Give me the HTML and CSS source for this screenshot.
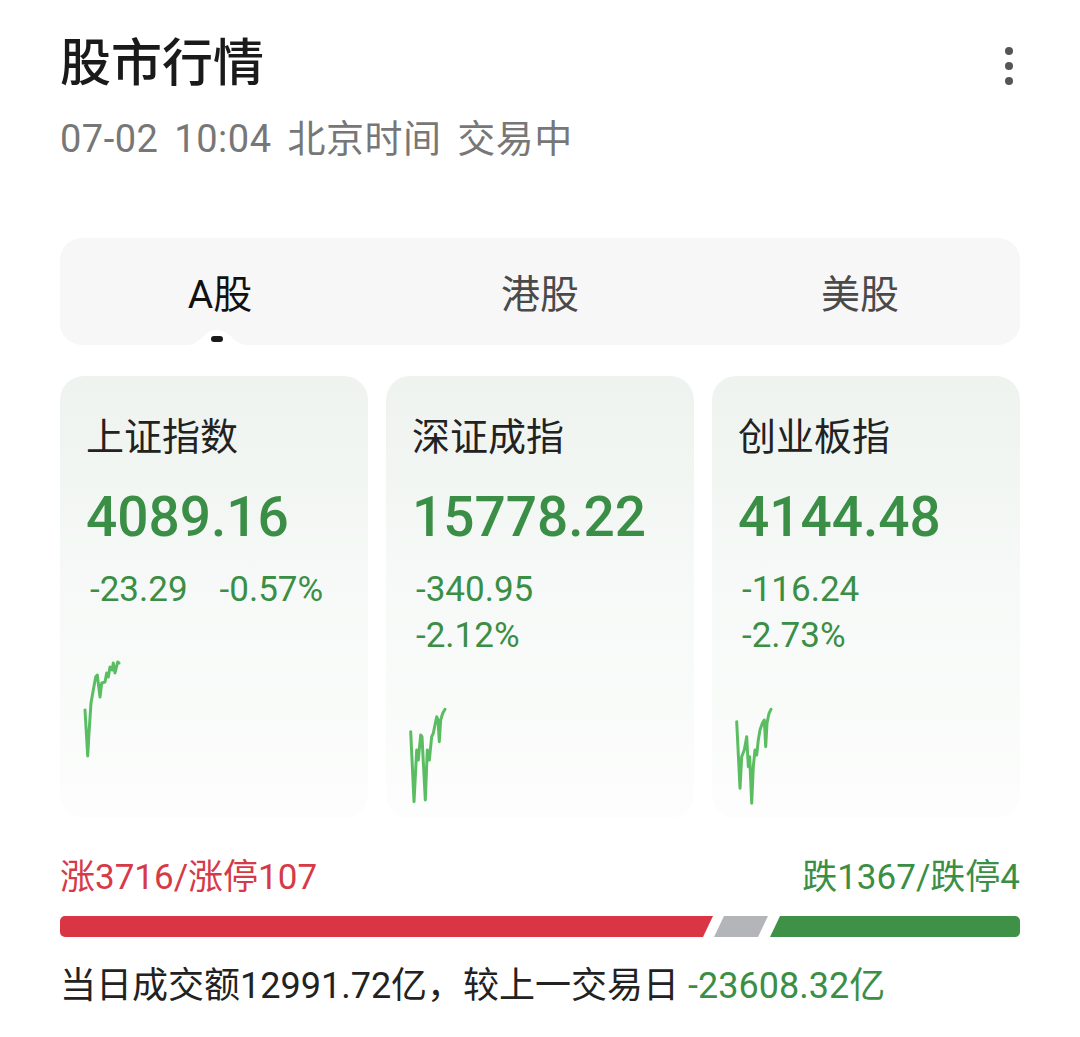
FILE: index.html
```html
<!DOCTYPE html>
<html lang="zh-CN">
<head>
<meta charset="utf-8">
<title>股市行情</title>
<link rel="stylesheet" href="styles.css">
</head>
<body>
<div class="page">
  <header class="header">
    <div class="header-text">
      <h1 class="title">股市行情</h1>
      <div class="subtitle">07-02 10:04 北京时间 交易中</div>
    </div>
    <button class="more" aria-label="更多">
      <span class="dot"></span><span class="dot"></span><span class="dot"></span>
    </button>
  </header>

  <nav class="tabs">
    <div class="tab active">A股
      <svg class="tab-bump" width="60" height="16" viewBox="0 0 60 16"><path d="M0 16 C14 16 16 1 30 1 C44 1 46 16 60 16 Z" fill="#fff"/></svg>
      <span class="tab-mark"></span>
    </div>
    <div class="tab">港股</div>
    <div class="tab">美股</div>
  </nav>

  <section class="cards">
    <div class="card">
      <div class="card-name">上证指数</div>
      <div class="card-value">4089.16</div>
      <div class="card-change"><span>-23.29</span><span>-0.57%</span></div>
      <svg class="spark" viewBox="0 0 242 100" width="242" height="100">
        <polyline points="-1,50 1.7,96 3,73 5,43 7.3,30 9.7,17 11.3,15 14,37 15.7,23 19,22 20.7,13 22.3,17 24,7 26.3,10 27.3,3 29,13 31.7,2 33,3"/>
      </svg>
    </div>
    <div class="card">
      <div class="card-name">深证成指</div>
      <div class="card-value">15778.22</div>
      <div class="card-change"><span>-340.95</span><span>-2.12%</span></div>
      <svg class="spark" viewBox="0 0 242 100" width="242" height="100">
        <polyline points="-1.3,25.7 2,95.7 4.7,44 6.3,54 8.7,29 10,30.7 13.3,94 15.3,44 17.3,54 19.7,30.7 21.3,27.3 23.3,17.3 24.7,10.7 26,14 27.3,35.7 28.7,14 30.7,7.3 33,3.3"/>
      </svg>
    </div>
    <div class="card">
      <div class="card-name">创业板指</div>
      <div class="card-value">4144.48</div>
      <div class="card-change"><span>-116.24</span><span>-2.73%</span></div>
      <svg class="spark" viewBox="0 0 242 100" width="242" height="100">
        <polyline points="-1.3,15.7 2,82.3 3.7,50.7 6.3,44 8.7,30.7 10.3,60.7 11.7,50.7 13.7,97.3 15.3,60.7 17,44 18.7,49 20.3,34 22,24 24.3,17.3 26.3,14 27.7,40.7 29,17.3 31,7.3 33,3.3"/>
      </svg>
    </div>
  </section>

  <section class="breadth">
    <div class="breadth-labels">
      <span class="up">涨3716/涨停107</span>
      <span class="down">跌1367/跌停4</span>
    </div>
    <div class="breadth-bar">
      <span class="seg seg-up"></span>
      <span class="seg seg-flat"></span>
      <span class="seg seg-down"></span>
    </div>
  </section>

  <p class="turnover">当日成交额12991.72亿，较上一交易日 <span class="down">-23608.32亿</span></p>
</div>
</body>
</html>
```

FILE: styles.css
```css
* { box-sizing: border-box; }

html, body {
  margin: 0;
  background: #fff;
}

body {
  font-family: Roboto, "Noto Sans CJK SC", sans-serif;
  color: #1a1a1a;
}

.page {
  width: 1080px;
  padding: 0 60px;
}

/* header */
.header {
  display: flex;
  justify-content: space-between;
  align-items: flex-start;
  padding-top: 32px;
}

.title {
  margin: 0;
  font-size: 51px;
  line-height: 64px;
  font-weight: 500;
  color: #1a1a1a;
}

.subtitle {
  margin-top: 18px;
  font-size: 38px;
  line-height: 50px;
  word-spacing: 6px;
  letter-spacing: 0.5px;
  color: #777;
}

.more {
  display: flex;
  flex-direction: column;
  align-items: center;
  gap: 7px;
  margin: 15px 7px 0 0;
  padding: 0;
  border: 0;
  background: none;
}

.more .dot {
  width: 8px;
  height: 8px;
  border-radius: 50%;
  background: #555;
}

/* market tabs */
.tabs {
  display: grid;
  grid-template-columns: repeat(3, minmax(0, 1fr));
  margin-top: 74px;
  height: 107px;
  background: #f7f7f7;
  border-radius: 22px;
}

.tab {
  position: relative;
  display: flex;
  justify-content: center;
  align-items: center;
  padding-bottom: 2px;
  font-size: 39px;
  color: #4a4a4a;
}

.tab.active {
  color: #111;
}

.tab-bump {
  position: absolute;
  left: 50%;
  bottom: 0;
  margin-left: -33px;
}

.tab-mark {
  position: absolute;
  left: 50%;
  bottom: 3px;
  margin-left: -9px;
  width: 12px;
  height: 6px;
  border-radius: 3px;
  background: #1a1a1a;
}

/* index cards */
.cards {
  display: grid;
  grid-template-columns: repeat(3, minmax(0, 1fr));
  gap: 18px;
  margin-top: 31px;
}

.card {
  min-width: 0;
  padding: 36px 40px 12px 26px;
  border-radius: 24px;
  background: linear-gradient(180deg, #eef3ef 0%, #f6f9f7 45%, #fcfdfc 100%);
}

.card-name {
  font-size: 38px;
  line-height: 50px;
  color: #222;
}

.card-value {
  margin-top: 20px;
  font-size: 55px;
  line-height: 70px;
  font-weight: 500;
  color: #3b8e45;
}

.card-change {
  display: flex;
  flex-wrap: wrap;
  column-gap: 32px;
  margin-top: 15px;
  padding-left: 4px;
  font-size: 35px;
  line-height: 46px;
  color: #3b8e45;
}

.spark {
  display: block;
  margin-top: 47px;
  overflow: visible;
}

.spark polyline {
  fill: none;
  stroke: #5bbd62;
  stroke-width: 3;
  stroke-linejoin: round;
  stroke-linecap: round;
}

/* advance / decline */
.breadth {
  margin-top: 37px;
}

.breadth-labels {
  display: flex;
  justify-content: space-between;
  font-size: 35px;
  line-height: 46px;
}

.up { color: #d63a47; }
.down { color: #3b8e45; }

.breadth-bar {
  display: flex;
  margin-top: 15px;
  height: 21px;
}

.seg { display: block; height: 100%; }

.seg-up {
  width: 653px;
  background: #d93545;
  border-radius: 5px 0 0 5px;
  clip-path: polygon(0 0, 100% 0, calc(100% - 10px) 100%, 0 100%);
}

.seg-flat {
  width: 54px;
  margin-left: 1px;
  background: #b4b5b8;
  clip-path: polygon(10px 0, 100% 0, calc(100% - 10px) 100%, 0 100%);
}

.seg-down {
  flex: 1;
  margin-left: 2px;
  background: #3e9146;
  border-radius: 0 5px 5px 0;
  clip-path: polygon(10px 0, 100% 0, 100% 100%, 0 100%);
}

.turnover {
  margin: 25px 0 0;
  font-size: 36px;
  line-height: 48px;
  color: #222;
}
```
